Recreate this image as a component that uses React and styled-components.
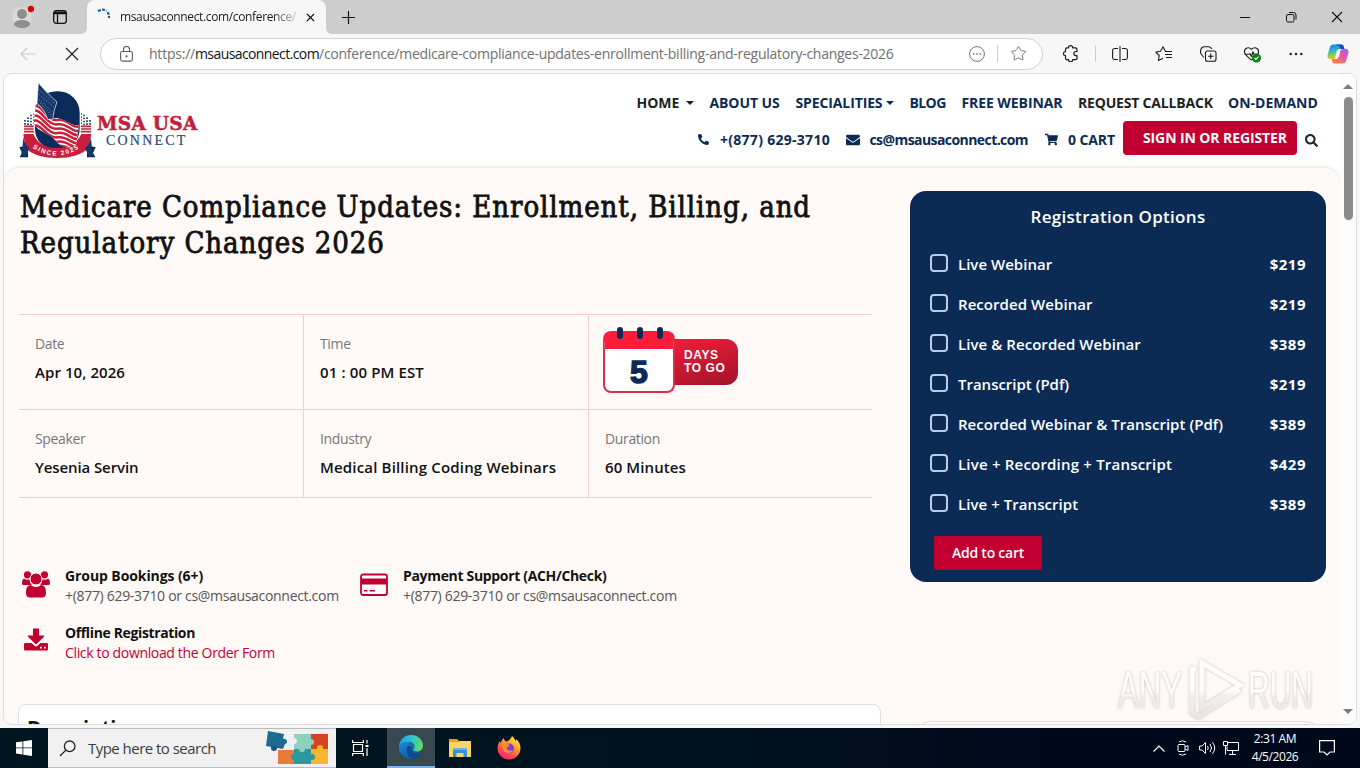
import React from 'react';
import styled, { createGlobalStyle } from 'styled-components';
import { FaEnvelope, FaPhoneAlt, FaShoppingCart, FaSearch } from 'react-icons/fa';
import { Star, HeartPulse, X } from 'lucide-react';

const GlobalStyle = createGlobalStyle`
  * { box-sizing: border-box; }
  body {
    margin: 0;
    overflow: hidden;
    background: #f7f7f7;
    font-family: 'Open Sans', 'Noto Sans', sans-serif;
  }
  svg { display: block; flex: none; }
`;

const NAVY = '#0b2b55';
const RED = '#c10031';

const Screen = styled.div`
  position: relative;
  display: flex;
  flex-direction: column;
  width: 1360px;
  height: 768px;
  overflow: hidden;
`;

const Label = styled.span`
  white-space: nowrap;
  letter-spacing: ${p => p.$ls || 0}px;
`;

/* browser chrome */

const TabStrip = styled.div`
  display: flex;
  height: 34px;
  background: #f7f7f7;
`;

const StripLeft = styled.div`
  display: flex;
  align-items: center;
  width: 87px;
  padding-left: 12px;
  gap: 19px;
  background: #cdcdcd;
  border-radius: 0 0 6px 0;
`;

const TabSlot = styled.div`
  background: #cdcdcd;
`;

const Tab = styled.div`
  display: flex;
  align-items: center;
  width: 239px;
  height: 34px;
  padding: 0 9px 0 10px;
  background: #f7f7f7;
  border-radius: 8px 8px 0 0;
`;

const TabTitle = styled.div`
  width: 177px;
  margin: 0 8px 0 9px;
  overflow: hidden;
  font-size: 12px;
  line-height: 20px;
  color: #1b1b1b;
  mask-image: linear-gradient(90deg, #000 152px, transparent 182px);
`;

const StripRight = styled.div`
  display: flex;
  flex: 1;
  align-items: center;
  justify-content: space-between;
  padding: 0 17px 0 16px;
  background: #cdcdcd;
  border-radius: 0 0 0 6px;
`;

const WindowButtons = styled.div`
  display: flex;
  align-items: center;
  gap: 34px;
`;

const Toolbar = styled.div`
  display: flex;
  align-items: center;
  height: 39px;
  padding-left: 20px;
  background: #f7f7f7;
`;

const NavButtons = styled.div`
  display: flex;
  align-items: center;
  gap: 29px;
  width: 80px;
`;

const AddressBar = styled.div`
  display: flex;
  align-items: center;
  width: 943px;
  height: 32px;
  padding: 0 15px 0 19px;
  border: 1px solid #d2d2d2;
  border-radius: 16px;
  background: #fff;
  font-size: 14px;
  color: #707070;
`;

const Url = styled.div`
  display: flex;
  flex: 1;
  padding-left: 16px;
`;

const Host = styled(Label)`
  color: #111;
`;

const Divider = styled.div`
  width: 1px;
  height: 17px;
  margin: 0 12px 0 12px;
  background: #cfcfcf;
`;

const Actions = styled.div`
  display: flex;
  align-items: center;
  padding-left: 6px;
`;

const Action = styled.div`
  display: flex;
  justify-content: center;
  width: ${p => p.$w || 44}px;
`;

/* page */

const Viewport = styled.div`
  display: flex;
  height: 652px;
  margin: 0 3px 3px 3px;
  border: 1px solid #dedede;
  border-radius: 9px;
  background: #fff;
  overflow: hidden;
`;

const Page = styled.div`
  display: flex;
  flex-direction: column;
  width: 1336px;
`;

const Header = styled.header`
  display: flex;
  justify-content: space-between;
  height: 94px;
  padding: 4px 22px 0 11px;
`;

const Brand = styled.div`
  display: flex;
`;

const BrandText = styled.div`
  display: flex;
  flex-direction: column;
  padding-top: 34px;
`;

const BrandName = styled.div`
  height: 22px;
  font: 700 18.5px/24px 'DejaVu Serif', serif;
  letter-spacing: 0.3px;
  color: #c21e3c;
  -webkit-text-stroke: 0.5px #c21e3c;
`;

const BrandSub = styled.div`
  padding-left: 9px;
  font: 400 14px/13px 'Liberation Serif', serif;
  letter-spacing: 2.2px;
  color: #2c4a73;
  -webkit-text-stroke: 0.2px #2c4a73;
`;

const Menus = styled.div`
  display: flex;
  flex-direction: column;
  align-items: flex-end;
  gap: 6px;
  padding-top: 13px;
  font-size: 14px;
  font-weight: 700;
  color: ${NAVY};
`;

const MenuRow = styled.nav`
  display: flex;
  gap: 16px;
  height: 24px;
  line-height: 24px;
`;

const MenuItem = styled.div`
  display: flex;
  align-items: center;
  justify-content: space-between;
  width: ${p => p.$w}px;
  color: ${p => (p.$dark ? '#1d1f24' : NAVY)};
`;

const Caret = styled.i`
  border: 4px solid transparent;
  border-top-color: currentColor;
  border-bottom: 0;
`;

const ContactRow = styled.div`
  display: flex;
  align-items: center;
  height: 34px;
`;

const Contact = styled.div`
  display: flex;
  align-items: center;
  justify-content: space-between;
  width: ${p => p.$w}px;
  margin-right: ${p => p.$mr}px;
  padding-top: 3px;
`;

const SignIn = styled.button`
  width: 174px;
  height: 34px;
  margin-right: 8px;
  padding: 0 0 2px 10px;
  border: 0;
  border-radius: 4px;
  background: ${RED};
  color: #fff;
  font: inherit;
  letter-spacing: -0.1px;
`;

const SearchSlot = styled.div`
  padding-top: 5px;
  color: #1d2530;
`;

const Main = styled.main`
  display: flex;
  flex: 1;
  justify-content: space-between;
  padding: 0 14px;
  border-radius: 16px 16px 0 0;
  background: #fffaf8;
  box-shadow: 0 0 4px rgba(60, 40, 40, 0.18);
  overflow: hidden;
`;

const Article = styled.div`
  width: 863px;
`;

const Title = styled.h1`
  margin: 0;
  padding: 21px 0 0 2px;
  font: 400 29px/36px 'DejaVu Serif Condensed', 'DejaVu Serif', serif;
  font-stretch: condensed;
  white-space: pre;
  letter-spacing: 0.93px;
  color: #111;
  -webkit-text-stroke: 0.8px #111;
`;

const InfoGrid = styled.div`
  display: grid;
  grid-template-columns: 285px 285px 283px;
  grid-template-rows: 95px 88px;
  width: 853px;
  margin: 53px 0 0 1px;
  border-bottom: 1px solid #f3cdd0;
`;

const InfoCell = styled.div`
  display: flex;
  flex-direction: column;
  gap: 6px;
  padding: 19px 0 0 16px;
  border-top: 1px solid #f3cdd0;
  border-right: ${p => (p.$last ? 0 : 1)}px solid #f3cdd0;
`;

const CountdownCell = styled(InfoCell)`
  padding: 12px 0 0 14px;
`;

const InfoLabel = styled.div`
  font-size: 14px;
  line-height: 20px;
  letter-spacing: -0.36px;
  color: #777;
`;

const InfoValue = styled.div`
  font-size: 15px;
  font-weight: 600;
  line-height: 24px;
  white-space: nowrap;
  letter-spacing: ${p => p.$ls}px;
  color: #111;
`;

const Countdown = styled.div`
  display: flex;
  align-items: flex-start;
`;

const Calendar = styled.div`
  position: relative;
  width: 72px;
  height: 62px;
  margin-top: 4px;
  border: 2px solid #e02b49;
  border-top: 18px solid #ff1c3a;
  border-radius: 8px;
  background: #fff;
  z-index: 1;
  text-align: center;
  font: 700 32px/46px 'Liberation Sans', Arial, sans-serif;
  color: ${NAVY};
  -webkit-text-stroke: 1.5px ${NAVY};
`;

const Ring = styled.i`
  position: absolute;
  top: -22px;
  left: ${p => p.$x}px;
  width: 6px;
  height: 12px;
  border-radius: 3px;
  background: ${NAVY};
`;

const DaysTag = styled.div`
  width: 67px;
  height: 46px;
  margin: 12px 0 0 -4px;
  padding: 10px 0 0 13px;
  border-radius: 0 12px 12px 0;
  background: linear-gradient(165deg, #f31c3c, #a01428);
  font: 700 12px/13px 'Liberation Sans', Arial, sans-serif;
  color: #fff;
`;

const SupportGrid = styled.div`
  display: grid;
  grid-template-columns: 338px 338px;
  row-gap: 17px;
  margin-top: 68px;
  padding-left: 4px;
`;

const SupportItem = styled.div`
  display: flex;
  gap: 15px;
`;

const SupportText = styled.div`
  display: flex;
  flex-direction: column;
  font-size: 14px;
  line-height: 20px;
  color: #555;
`;

const SupportTitle = styled(Label)`
  font-weight: 700;
  color: #111;
`;

const OrderLink = styled(Label)`
  color: ${RED};
`;

const DescriptionCard = styled.section`
  height: 60px;
  margin-top: 41px;
  padding: 6px 8px 0;
  border: 1px solid #e4dfde;
  border-radius: 8px;
  background: #fff;
  font-size: 20px;
  font-weight: 700;
  line-height: 34px;
  color: #111;
`;

const Aside = styled.aside`
  width: 416px;
  padding-top: 23px;
`;

const Panel = styled.div`
  height: 391px;
  padding: 14px 20px 0;
  border-radius: 16px;
  background: ${NAVY};
  color: #fff;
`;

const PanelTitle = styled.h2`
  margin: 0 0 15px;
  text-align: center;
  font-size: 17px;
  font-weight: 600;
  line-height: 24px;
  letter-spacing: 0.3px;
`;

const Option = styled.label`
  display: flex;
  align-items: center;
  height: 40px;
  font-size: 15px;
  font-weight: 600;
`;

const Checkbox = styled.span`
  width: 18px;
  height: 18px;
  margin: 0 10px 2px 0;
  border: 2px solid #bccdea;
  border-radius: 4px;
`;

const Price = styled.span`
  margin-left: auto;
  font-weight: 700;
  letter-spacing: 0.5px;
`;

const AddToCart = styled.button`
  display: block;
  width: 108px;
  height: 34px;
  margin: 12px 0 0 4px;
  padding: 0 0 1px;
  border: 0;
  border-radius: 2px;
  background: ${RED};
  color: #fff;
  font: 600 14px 'Open Sans', sans-serif;
  letter-spacing: -0.25px;
`;

const NextPanel = styled.div`
  height: 40px;
  margin: 139px 4px 0;
  border: 1px solid #f0d5d6;
  border-radius: 16px;
`;

const Scrollbar = styled.div`
  display: flex;
  flex: 1;
  flex-direction: column;
  align-items: center;
  padding: 10px 0 10px 0;
  background: #fcfcfc;
`;

const Arrow = styled.i`
  border: 5px solid transparent;
  border-${p => (p.$up ? 'bottom' : 'top')}-color: #7e7e7e;
  border-${p => (p.$up ? 'top' : 'bottom')}: 0;
`;

const Thumb = styled.div`
  width: 9px;
  height: 123px;
  margin: 8px 0 auto;
  border-radius: 5px;
  background: #8b8b8b;
`;

/* taskbar */

const Taskbar = styled.div`
  display: flex;
  height: 40px;
  background: linear-gradient(90deg, #001722, #00131f 50%, #00081b 80%);
  color: #fff;
`;

const TaskButton = styled.div`
  display: flex;
  align-items: center;
  justify-content: center;
  width: ${p => p.$w || 49}px;
`;

const ActiveTask = styled(TaskButton)`
  margin: 0 0 0 2px;
  background: #38484f;
  border-bottom: 2px solid #76b5ea;
`;

const SearchBox = styled.div`
  display: flex;
  align-items: center;
  width: 288px;
  padding-left: 11px;
  background: #f1f1f1;
  border-top: 1px solid #b9b9b9;
  border-bottom: 1px solid #b9b9b9;
  font-size: 15px;
  color: #3c3c3c;
`;

const SearchHint = styled(Label)`
  flex: none;
  width: 189px;
  padding-left: 12px;
`;

const Tray = styled.div`
  display: flex;
  align-items: center;
  width: 210px;
  margin-left: auto;
`;

const Clock = styled.div`
  width: 58px;
  text-align: center;
  font-size: 12px;
  line-height: 18px;
  letter-spacing: -0.42px;
`;

const Watermark = styled.svg`
  position: absolute;
  left: 1110px;
  top: 652px;
  opacity: 0.85;
  filter: drop-shadow(0 0 1.5px rgba(90, 70, 70, 0.4));
`;

const Logo = () => (
  <svg width="82" height="84" viewBox="0 0 246 252">
    <defs>
      <path id="since" d="M40 200 Q126 268 216 194" />
      <clipPath id="flag">
        <path d="M62 80C80 78 92 108 112 122C140 112 165 146 192 142L184 196C176 216 140 214 118 184C96 160 76 166 56 138Z" />
      </clipPath>
    </defs>
    <path d="M27 145h34M27 153h34M27 161h34M194 145h34M194 153h34M194 161h34" stroke="#c8203c" strokeWidth="5" />
    <path
      d="M30 126v16M39 118v24M48 110v32M57 106v36M225 126v16M216 118v24M207 110v32M198 106v36"
      stroke="#1b3a68"
      strokeWidth="5"
      strokeDasharray="5 4"
    />
    <rect x="58" y="38" width="138" height="180" rx="66" fill="#0b2b5a" stroke="#fff" strokeWidth="4" />
    <path d="M13 208l26-6v36H14l7-14zM242 208l-26-6v36h25l-7-14z" fill="#0b2b55" />
    <path d="M25 168h30q18 42 71 42t73-42h30l-8 42q-30 30-95 30t-95-30z" fill="#c8203c" />
    <path d="M25 176q2 22 18 34l-12 26-12-6 4-28zM228 176q-2 22-18 34l12 26 12-6-4-28z" fill="#17386a" />
    <g clipPath="url(#flag)">
      <rect x="50" y="60" width="150" height="160" fill="#fff" />
      {[0, 1, 2, 3, 4, 5, 6].map(i => (
        <path
          key={i}
          d={`M54 ${84 + i * 15}C80 ${74 + i * 15} 96 ${132 + i * 13} 128 ${126 + i * 13}S170 ${156 + i * 12} 198 ${144 + i * 13}`}
          fill="none"
          stroke="#c8203c"
          strokeWidth="7.500"
        />
      ))}
    </g>
    <path d="M70 14L66 76Q88 92 98 124L113 124Q116 95 126 72Q102 52 70 14Z" fill="#17386a" stroke="#fff" strokeWidth="2" />
    <path d="M74 36l42 38M73 50l42 36M72 64l40 38M76 76l34 36" stroke="#8fa3c4" strokeWidth="3" strokeDasharray="3 6" />
    <text fontFamily="Liberation Sans" fontWeight="700" fontSize="19" fill="#fff" letterSpacing="4.500">
      <textPath href="#since" startOffset="16">SINCE 2025</textPath>
    </text>
  </svg>
);

const GroupIcon = () => (
  <svg width="28" height="32" viewBox="0 0 28 32" fill={RED}>
    <circle cx="5.500" cy="8.800" r="3.600" />
    <circle cx="22.500" cy="8.800" r="3.600" />
    <path d="M0 17.500c0-3 .8-4.800 2.200-4.800 1.500 1 4 1.300 5.600.5-.2 2 .5 4.200 2 5.800H2.500C1 19 0 18.500 0 17.500zM28 17.500c0-3-.8-4.800-2.200-4.800-1.500 1-4 1.300-5.600.5.200 2-.5 4.200-2 5.800h7.300c1.500 0 2.500-.5 2.500-1.500z" />
    <circle cx="14" cy="13" r="6" stroke="#fffaf8" strokeWidth="1" />
    <path d="M4 27c0-5 1.500-8 5-8 1.500 1.300 3 2 5 2s3.500-.7 5-2c3.500 0 5 3 5 8 0 3-1.600 4.500-4 4.500H8c-2.400 0-4-1.500-4-4.500z" />
  </svg>
);

const CardIcon = () => (
  <svg width="28" height="32" viewBox="0 0 28 32">
    <rect x="1" y="8.500" width="26" height="20.500" rx="2" fill="#fff" stroke={RED} strokeWidth="1.800" />
    <path d="M1 12.500h26v6H1z" fill={RED} />
    <path d="M4 24.700h3.500M9.500 24.700h5.500" stroke={RED} strokeWidth="1.600" />
  </svg>
);

const DownloadIcon = () => (
  <svg width="28" height="32" viewBox="0 0 28 32" fill={RED}>
    <path d="M11 5.500h6v7h4.500c.8 0 1 .7.5 1.300L14.600 21a.9.9 0 0 1-1.200 0L6 13.800c-.5-.6-.3-1.300.5-1.300H11z" />
    <path fillRule="evenodd" d="M3.500 20h6l3 2.800a2.200 2.200 0 0 0 3 0l3-2.800h6c1 0 1.500.6 1.500 1.500V26c0 1-.5 1.500-1.500 1.500h-21C2.500 27.500 2 27 2 26v-4.500c0-.9.5-1.500 1.500-1.500zM18 23.800v1.800h1.800v-1.800zm4 0v1.800h1.800v-1.800z" />
  </svg>
);

const Copilot = () => (
  <svg width="22" height="22" viewBox="0 0 22 22">
    <defs>
      <linearGradient id="cpA" x1="0" y1="0" x2="0.2" y2="1">
        <stop offset="0" stopColor="#1a83e4" />
        <stop offset=".45" stopColor="#27b7c9" />
        <stop offset=".75" stopColor="#8ccf4a" />
        <stop offset="1" stopColor="#f4bc1e" />
      </linearGradient>
      <linearGradient id="cpB" x1="0.8" y1="0" x2="0.2" y2="1">
        <stop offset="0" stopColor="#a65fe8" />
        <stop offset=".5" stopColor="#e85b9c" />
        <stop offset="1" stopColor="#fb8a3c" />
      </linearGradient>
    </defs>
    <path d="M14.500 1.500c1.500 0 2 1 2.400 2.500l.6 2H13c-1.500 0-2 .8-2.500 2.300L9 13.500C8.500 15 7.800 16 6 16H3.500C.5 16 0 13.800.7 11.500L3 4c.6-1.700 1.500-2.500 3.200-2.500z" fill="url(#cpA)" />
    <path d="M7.500 20.500c-1.500 0-2-1-2.400-2.500l-.6-2H9c1.500 0 2-.8 2.500-2.300L13 8.500C13.500 7 14.200 6 16 6h2.500c3 0 3.500 2.200 2.800 4.500L19 18c-.6 1.700-1.500 2.500-3.200 2.500z" fill="url(#cpB)" />
    <path d="M8.200 1.500h6.300c1.500 0 2 1 2.400 2.500l.6 2h-4L12 3z" fill="#174fc0" />
    <path d="M9.900 7.500h3.400l-1.300 6.500H8.200z" fill="#f7f7f7" />
  </svg>
);

const EdgeLogo = () => (
  <svg width="24" height="24" viewBox="0 0 24 24">
    <defs>
      <linearGradient id="eA" x1="0" y1="0.3" x2="1" y2="0.4">
        <stop offset="0" stopColor="#1f9fe6" />
        <stop offset=".5" stopColor="#2bc3d2" />
        <stop offset="1" stopColor="#5fe05a" />
      </linearGradient>
      <linearGradient id="eB" x1="0" y1="0" x2="0.6" y2="1">
        <stop offset="0" stopColor="#1b8fe0" />
        <stop offset="1" stopColor="#0c59a4" />
      </linearGradient>
    </defs>
    <path d="M0 12C0 5 5 4 9 5l6 6.500c-2 3.500 2 7.500 7.600 6.300C20.500 21.500 16.500 24 12 24 5.400 24 0 18.600 0 12z" fill="url(#eB)" />
    <path d="M9.500 10.500C5.500 14 7.500 22 14.500 23.700c3.500-.8 6.300-2.700 8-5.400.3-.5 0-.7-.4-.5-5 2.200-10.600-1-9.100-5.300z" fill="#114a8b" />
    <path d="M.3 10C1.300 4 6 0 12 0c7 0 12 5 12 10.500 0 3.500-2.500 6-5.800 6-2.500 0-4-.9-4-1.900 0-.8 1.300-1 1.300-3 0-2.800-2.500-4.900-6.500-4.900C5 6.700 1.500 8 .3 10z" fill="url(#eA)" />
  </svg>
);

const FolderLogo = () => (
  <svg width="22" height="20" viewBox="0 0 22 20">
    <path d="M0 1h8l2 2h12v4H0z" fill="#e8a21c" />
    <path d="M0 4h9l2-1h11v16H0z" fill="#fbd65f" />
    <path d="M4 10h14v9h-3.500v-4h-7v4H4z" fill="#3d8fce" />
    <path d="M4 10h14v2H4z" fill="#63b2e8" />
  </svg>
);

const FirefoxLogo = () => (
  <svg width="24" height="24" viewBox="0 0 24 24">
    <defs>
      <linearGradient id="ffx" x1="0.8" y1="0" x2="0.2" y2="1">
        <stop offset="0" stopColor="#fff04a" />
        <stop offset=".35" stopColor="#ffa52a" />
        <stop offset=".7" stopColor="#ff4a4c" />
        <stop offset="1" stopColor="#e5207c" />
      </linearGradient>
    </defs>
    <path d="M15 0c2 2 3 3 3.500 5 .8-.5.7-1.200.6-1.800C22 5 23.700 9 23.500 13 23 19 18 23.500 12 23.500S.5 19 .5 12.500C.5 9 1.800 6.500 3 5c.1 1 .3 1.300.8 1.700C4.500 4.500 5.500 3.200 7 2c0 1.800.7 3 2.500 3.600C12 5 13.500 3 15 0z" fill="url(#ffx)" />
    <circle cx="12" cy="12.500" r="5" fill="#7a3ee0" />
    <path d="M4.500 7.500c3-1.500 5 0 5.500.8 1 0 2.600.2 2.600 1-.2 1.400-2.600 1.400-2.800 2.800 0 2 3 3.500 6.500 2-2 4.500-9.500 4-10.500-1.500z" fill="#ff8a2b" />
  </svg>
);

const PuzzlePicture = () => (
  <svg width="64" height="36" viewBox="0 0 64 36">
    <path d="M3 1l16 3-1 5c4-1 6 4 2 5l-2 5-17-3z" fill="#1c6b93" />
    <circle cx="9" cy="18" r="3" fill="#17597e" />
    <path d="M13 20h17v14H13z" fill="#ea7a3a" />
    <path d="M29 4h17v15H29z" fill="#8ed1bf" />
    <path d="M46 4h17v15H46z" fill="#d8431f" />
    <path d="M29 19h17v15H29z" fill="#2a9aa0" />
    <path d="M46 19h17v15H46z" fill="#f6b52e" />
    <circle cx="37" cy="19" r="3" fill="#8ed1bf" />
    <circle cx="46" cy="12" r="3" fill="#8ed1bf" />
    <circle cx="29" cy="27" r="3" fill="#2a9aa0" />
    <circle cx="47" cy="27" r="3" fill="#2a9aa0" />
    <circle cx="55" cy="18" r="3" fill="#f6b52e" />
    <circle cx="29" cy="11" r="3" fill="#f1f1f1" />
  </svg>
);

const PuzzleIcon = () => (
  <svg width="16" height="17" viewBox="0 0 16 17" fill="none" stroke="#1b1b1b" strokeWidth="1.200" strokeLinejoin="round">
    <path d="M5.500 2.800a2.100 2.100 0 0 1 4.200 0H12.500a1.500 1.500 0 0 1 1.500 1.500v2.200h-1a2 2 0 0 0 0 4.200h1v2.500a1.500 1.500 0 0 1-1.500 1.500H9.700a2.100 2.100 0 0 1-4.200 0H4a1.500 1.500 0 0 1-1.500-1.500v-2.500a2.100 2.100 0 0 1 0-4.200V4.300A1.500 1.500 0 0 1 4 2.800z" />
  </svg>
);

const menu = [
  { text: 'HOME', w: 57, caret: true, dark: true },
  { text: 'ABOUT US', w: 70, ls: -0.1 },
  { text: 'SPECIALITIES', w: 98, ls: -0.12, caret: true },
  { text: 'BLOG', w: 36, ls: -0.6 },
  { text: 'FREE WEBINAR', w: 100.5, ls: -0.08 },
  { text: 'REQUEST CALLBACK', w: 134, ls: -0.19, dark: true },
  { text: 'ON-DEMAND', w: 90 },
];

const options = [
  ['Live Webinar', '$219', 0.02],
  ['Recorded Webinar', '$219', 0.06],
  ['Live & Recorded Webinar', '$389', 0.06],
  ['Transcript (Pdf)', '$219', -0.01],
  ['Recorded Webinar & Transcript (Pdf)', '$389', 0.04],
  ['Live + Recording + Transcript', '$429', 0.2],
  ['Live + Transcript', '$389', 0.06],
];

const Browser = () => (
  <>
    <TabStrip>
      <StripLeft>
        <svg width="22" height="24" viewBox="0 0 22 24">
          <circle cx="10" cy="12" r="10" fill="#dcdad8" />
          <circle cx="10" cy="9" r="5" fill="#8f8c89" />
          <ellipse cx="10" cy="19" rx="8" ry="4" fill="#8f8c89" />
          <circle cx="19" cy="4" r="3.200" fill="#d8000f" />
        </svg>
        <svg width="14" height="14" viewBox="0 0 14 14" fill="none" stroke="#111" strokeWidth="1.300">
          <rect x=".7" y=".7" width="12.600" height="12.600" rx="2.500" />
          <path d="M1 3.500h12M4.500 3.500V13" />
          <path d="M1 2.500h12" strokeWidth="2" />
        </svg>
      </StripLeft>
      <TabSlot>
        <Tab>
          <svg width="14" height="18" viewBox="0 0 14 18" fill="none" stroke="#1c5e9c" strokeWidth="2.200">
            <path d="M1 3.200Q6 .3 9.500 3M10.500 4.200Q12.300 6 12 10" strokeDasharray="3 1.200" />
          </svg>
          <TabTitle><Label $ls={-0.36}>msausaconnect.com/conference/m</Label></TabTitle>
          <X size={13} strokeWidth={2} color="#111" />
        </Tab>
      </TabSlot>
      <StripRight>
        <svg width="13" height="13" viewBox="0 0 13 13" stroke="#111" strokeWidth="1.200">
          <path d="M6.500 0v13M0 6.500h13" />
        </svg>
        <WindowButtons>
          <svg width="12" height="12" viewBox="0 0 12 12" stroke="#111"><path d="M1 6.500h10" /></svg>
          <svg width="12" height="12" viewBox="0 0 12 12" fill="none" stroke="#111">
            <rect x="1.500" y="3.500" width="7.500" height="7.500" rx="1.500" />
            <path d="M4 1.500h4.500a2.500 2.500 0 0 1 2.500 2.500v4.500" />
          </svg>
          <svg width="12" height="12" viewBox="0 0 12 12" stroke="#111" strokeWidth="1.100"><path d="M1 1l10 10M11 1L1 11" /></svg>
        </WindowButtons>
      </StripRight>
    </TabStrip>
    <Toolbar>
      <NavButtons>
        <svg width="16" height="14" viewBox="0 0 16 14" fill="none" stroke="#c9c9c9" strokeWidth="1.100"><path d="M15.500 7H1M7 1L1 7l6 6" /></svg>
        <svg width="14" height="14" viewBox="0 0 14 14" stroke="#222" strokeWidth="1.200"><path d="M1 1l12 12M13 1L1 13" /></svg>
      </NavButtons>
      <AddressBar>
        <svg width="13" height="16" viewBox="0 0 13 16" fill="none" stroke="#5f5f5f" strokeWidth="1.100">
          <rect x=".6" y="5.500" width="11.800" height="9.600" rx="1.800" />
          <path d="M3.500 5.500V3.500a3 3 0 0 1 6 0v2" />
          <circle cx="6.500" cy="10.300" r=".6" fill="#5f5f5f" />
        </svg>
        <Url>
          <Label $ls={-0.22}>https://</Label>
          <Host $ls={-0.59}>msausaconnect.com</Host>
          <Label $ls={-0.26}>/conference/medicare-compliance-updates-enrollment-billing-and-regulatory-changes-2026</Label>
        </Url>
        <svg width="16" height="16" viewBox="0 0 16 16" fill="none" stroke="#777">
          <circle cx="8" cy="8" r="7.400" />
          <path d="M3.800 8h1.700M7.200 8h1.600M10.500 8h1.700" strokeWidth="1.500" />
        </svg>
        <Divider />
        <Star size={17} strokeWidth={1.400} color="#777" />
      </AddressBar>
      <Actions>
        <Action><PuzzleIcon /></Action>
        <Action $w={5}><svg width="1" height="16"><path d="M.5 0v16" stroke="#ccc" /></svg></Action>
        <Action>
          <svg width="16" height="16" viewBox="0 0 16 16" fill="none" stroke="#1b1b1b" strokeWidth="1.100">
            <path d="M6 2.500H2.500A2 2 0 0 0 .6 4.500v7a2 2 0 0 0 1.900 2H6M10 2.500h3.500a2 2 0 0 1 1.900 2v7a2 2 0 0 1-1.900 2H10M8 0v16" />
          </svg>
        </Action>
        <Action>
          <svg width="18" height="16" viewBox="0 0 18 16" fill="none" stroke="#1b1b1b" strokeWidth="1.100" strokeLinejoin="round">
            <path d="M17 5.500h-6.500L8 .8 5.500 5.300.8 6l3.400 3.500-.8 5L8 12.200M10 8.500h7M11 11.500h6" />
          </svg>
        </Action>
        <Action>
          <svg width="17" height="16" viewBox="0 0 17 16" fill="none" stroke="#1b1b1b" strokeWidth="1.100">
            <path d="M3.800 11.500L1.200 8Q0 6.500.9 3.500 1.500 1 4 .8h4.500Q11 .8 11.600 3" />
            <rect x="5.500" y="5" width="10.500" height="10.300" rx="2" />
            <path d="M10.700 7.500v5.500M8 10.200h5.500" />
          </svg>
        </Action>
        <Action>
          <svg width="19" height="18" viewBox="0 0 19 18">
            <HeartPulse size={17} strokeWidth={1.600} color="#1b1b1b" />
            <circle cx="13.500" cy="13" r="4.500" fill="#117d18" />
            <path d="M11.500 13l1.500 1.500 2.500-2.800" fill="none" stroke="#fff" strokeWidth="1.100" />
          </svg>
        </Action>
        <Action>
          <svg width="14" height="4" viewBox="0 0 14 4" fill="#1b1b1b">
            <circle cx="1.700" cy="2" r="1.200" /><circle cx="7" cy="2" r="1.200" /><circle cx="12.300" cy="2" r="1.200" />
          </svg>
        </Action>
        <Action $w={40}><Copilot /></Action>
      </Actions>
    </Toolbar>
  </>
);

const SiteHeader = () => (
  <Header>
    <Brand>
      <Logo />
      <BrandText>
        <BrandName>MSA USA</BrandName>
        <BrandSub>CONNECT</BrandSub>
      </BrandText>
    </Brand>
    <Menus>
      <MenuRow>
        {menu.map(m => (
          <MenuItem key={m.text} $w={m.w} $dark={m.dark}>
            <Label $ls={m.ls}>{m.text}</Label>
            {m.caret && <Caret />}
          </MenuItem>
        ))}
      </MenuRow>
      <ContactRow>
        <Contact $w={132} $mr={16}><FaPhoneAlt size={11} /><Label $ls={0.29}>+(877) 629-3710</Label></Contact>
        <Contact $w={182} $mr={17}><FaEnvelope size={14} /><Label $ls={-0.57}>cs@msausaconnect.com</Label></Contact>
        <Contact $w={70} $mr={8}><FaShoppingCart size={13} /><Label $ls={-0.1}>0 CART</Label></Contact>
        <SignIn>SIGN IN OR REGISTER</SignIn>
        <SearchSlot><FaSearch size={13} /></SearchSlot>
      </ContactRow>
    </Menus>
  </Header>
);

const Registration = () => (
  <Aside>
    <Panel>
      <PanelTitle>Registration Options</PanelTitle>
      {options.map(([name, price, ls]) => (
        <Option key={name}>
          <Checkbox />
          <Label $ls={ls}>{name}</Label>
          <Price>{price}</Price>
        </Option>
      ))}
      <AddToCart>Add to cart</AddToCart>
    </Panel>
    <NextPanel />
  </Aside>
);

const Content = () => (
  <Article>
    <Title>{'Medicare Compliance Updates: Enrollment, Billing, and\nRegulatory Changes 2026'}</Title>
    <InfoGrid>
      <InfoCell><InfoLabel>Date</InfoLabel><InfoValue $ls={0.08}>Apr 10, 2026</InfoValue></InfoCell>
      <InfoCell><InfoLabel>Time</InfoLabel><InfoValue $ls={0.13}>01 : 00 PM EST</InfoValue></InfoCell>
      <CountdownCell $last>
        <Countdown>
          <Calendar><Ring $x={12} /><Ring $x={32} /><Ring $x={52} />5</Calendar>
          <DaysTag><Label $ls={0.6}>DAYS</Label><br /><Label $ls={0.6}>TO GO</Label></DaysTag>
        </Countdown>
      </CountdownCell>
      <InfoCell><InfoLabel>Speaker</InfoLabel><InfoValue $ls={-0.1}>Yesenia Servin</InfoValue></InfoCell>
      <InfoCell><InfoLabel>Industry</InfoLabel><InfoValue $ls={0.17}>Medical Billing Coding Webinars</InfoValue></InfoCell>
      <InfoCell $last><InfoLabel>Duration</InfoLabel><InfoValue $ls={0.1}>60 Minutes</InfoValue></InfoCell>
    </InfoGrid>
    <SupportGrid>
      <SupportItem>
        <GroupIcon />
        <SupportText>
          <SupportTitle $ls={-0.09}>Group Bookings (6+)</SupportTitle>
          <Label $ls={-0.31}>+(877) 629-3710 or cs@msausaconnect.com</Label>
        </SupportText>
      </SupportItem>
      <SupportItem>
        <CardIcon />
        <SupportText>
          <SupportTitle $ls={-0.33}>Payment Support (ACH/Check)</SupportTitle>
          <Label $ls={-0.31}>+(877) 629-3710 or cs@msausaconnect.com</Label>
        </SupportText>
      </SupportItem>
      <SupportItem>
        <DownloadIcon />
        <SupportText>
          <SupportTitle $ls={-0.37}>Offline Registration</SupportTitle>
          <OrderLink $ls={-0.34}>Click to download the Order Form</OrderLink>
        </SupportText>
      </SupportItem>
    </SupportGrid>
    <DescriptionCard>Description</DescriptionCard>
  </Article>
);

const WindowsTaskbar = () => (
  <Taskbar>
    <TaskButton $w={48}>
      <svg width="16" height="16" viewBox="0 0 16 16" fill="#fff">
        <path d="M0 2.300l6.500-.9v6.100H0zM7.300 1.300L16 0v7.500H7.300zM0 8.300h6.500v6.200L0 13.600zM7.300 8.300H16V16l-8.700-1.300z" />
      </svg>
    </TaskButton>
    <SearchBox>
      <svg width="17" height="17" viewBox="0 0 17 17" fill="none" stroke="#222" strokeWidth="1.300">
        <circle cx="10.700" cy="6.300" r="5.300" /><path d="M7 10L1 16" />
      </svg>
      <SearchHint $ls={-0.53}>Type here to search</SearchHint>
      <PuzzlePicture />
    </SearchBox>
    <TaskButton>
      <svg width="17" height="16" viewBox="0 0 17 16" fill="none" stroke="#fff" strokeWidth="1.200">
        <path d="M.6 0v2.500h10.800V0M.6 16v-2.500h10.800V16M1.500 4.500h9v7h-9zM15 0v3.500M15 8v8" />
        <path d="M13.500 5h3v2h-3z" fill="#fff" stroke="none" />
      </svg>
    </TaskButton>
    <ActiveTask $w={48}><EdgeLogo /></ActiveTask>
    <TaskButton><FolderLogo /></TaskButton>
    <TaskButton><FirefoxLogo /></TaskButton>
    <Tray>
      <TaskButton $w={18}>
        <svg width="12" height="7" viewBox="0 0 12 7" fill="none" stroke="#fff" strokeWidth="1.200"><path d="M.5 6.500L6 1l5.500 5.500" /></svg>
      </TaskButton>
      <TaskButton $w={30}>
        <svg width="12" height="16" viewBox="0 0 12 16" fill="none" stroke="#fff">
          <rect x="1" y="4.500" width="7" height="7" rx="1" /><path d="M8 7l3-1.500v5L8 9M2 2Q5.500-.5 9 2M2 14q3.500 2.500 7 0" />
        </svg>
      </TaskButton>
      <TaskButton $w={18}>
        <svg width="17" height="14" viewBox="0 0 17 14" fill="none" stroke="#fff">
          <path d="M.6 5v4h2.500l3.400 3.500v-11L3.100 5zM8.500 5q1.500 2 0 4M11 3q3 4 0 8M13.500 1.200q4.500 5.800 0 11.600" />
        </svg>
      </TaskButton>
      <TaskButton $w={30}>
        <svg width="16" height="14" viewBox="0 0 16 14" fill="none" stroke="#fff">
          <path d="M5 1.500h10.500v8H4v-4M9.500 9.500v4M6 13.500h7M.5.500h4v4h-4zM2.500 4.500v9" />
        </svg>
      </TaskButton>
      <Clock>2:31 AM<br />4/5/2026</Clock>
      <TaskButton $w={46}>
        <svg width="16" height="16" viewBox="0 0 16 16" fill="none" stroke="#fff" strokeWidth="1.200">
          <path d="M.6.600h14.800v11.400H11L8 15l-3-3H.6z" />
        </svg>
      </TaskButton>
    </Tray>
  </Taskbar>
);

const AnyRun = () => (
  <Watermark width="210" height="72" viewBox="0 0 210 72">
    <defs>
      <linearGradient id="wm" x1="0" y1="0" x2="0" y2="1">
        <stop offset="0" stopColor="#fff" />
        <stop offset=".5" stopColor="#fff" />
        <stop offset=".6" stopColor="#f3eeec" />
        <stop offset="1" stopColor="#e6e0de" />
      </linearGradient>
    </defs>
    <g fill="url(#wm)" fontFamily="Liberation Sans" fontSize="51">
      <text x="8" y="56" textLength="64" lengthAdjust="spacingAndGlyphs">ANY</text>
      <text x="138" y="56" textLength="65" lengthAdjust="spacingAndGlyphs">RUN</text>
    </g>
    <path d="M92 11L130 33 92 56zM86 17H82v44l6 4L130 38" fill="none" stroke="url(#wm)" strokeWidth="5" />
  </Watermark>
);

const App = () => (
  <Screen>
    <GlobalStyle />
    <Browser />
    <Viewport>
      <Page>
        <SiteHeader />
        <Main>
          <Content />
          <Registration />
        </Main>
      </Page>
      <Scrollbar>
        <Arrow $up />
        <Thumb />
        <Arrow />
      </Scrollbar>
    </Viewport>
    <WindowsTaskbar />
    <AnyRun />
  </Screen>
);

export default App;
